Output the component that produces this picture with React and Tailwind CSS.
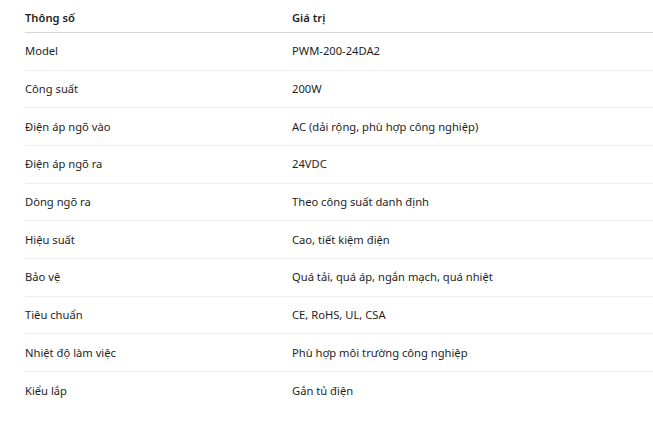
import React from "react";

const rows = [
  ["Model", "PWM-200-24DA2"],
  ["Công suất", "200W"],
  ["Điện áp ngõ vào", "AC (dải rộng, phù hợp công nghiệp)"],
  ["Điện áp ngõ ra", "24VDC"],
  ["Dòng ngõ ra", "Theo công suất danh định"],
  ["Hiệu suất", "Cao, tiết kiệm điện"],
  ["Bảo vệ", "Quá tải, quá áp, ngắn mạch, quá nhiệt"],
  ["Tiêu chuẩn", "CE, RoHS, UL, CSA"],
  ["Nhiệt độ làm việc", "Phù hợp môi trường công nghiệp"],
  ["Kiểu lắp", "Gắn tủ điện"],
];

export default function App() {
  return (
    <div
      className="w-[653px] h-[421px] bg-white overflow-hidden pl-[25px] text-[11.2px] text-[#1e1e1e]"
      style={{ fontFamily: '"Noto Sans", "Open Sans", sans-serif' }}
    >
      <div className="grid grid-cols-[267px_1fr] h-[33px] items-center pt-[4px] border-b border-[#d6d6d6] font-semibold">
        <div>Thông số</div>
        <div>Giá trị</div>
      </div>
      {rows.map(([k, v], i) => (
        <div
          key={k}
          className={
            "grid grid-cols-[267px_1fr] h-[37.67px] items-center pt-[1px] " +
            (i < rows.length - 1 ? "border-b border-[#efefef]" : "")
          }
        >
          <div>{k}</div>
          <div>{v}</div>
        </div>
      ))}
    </div>
  );
}
